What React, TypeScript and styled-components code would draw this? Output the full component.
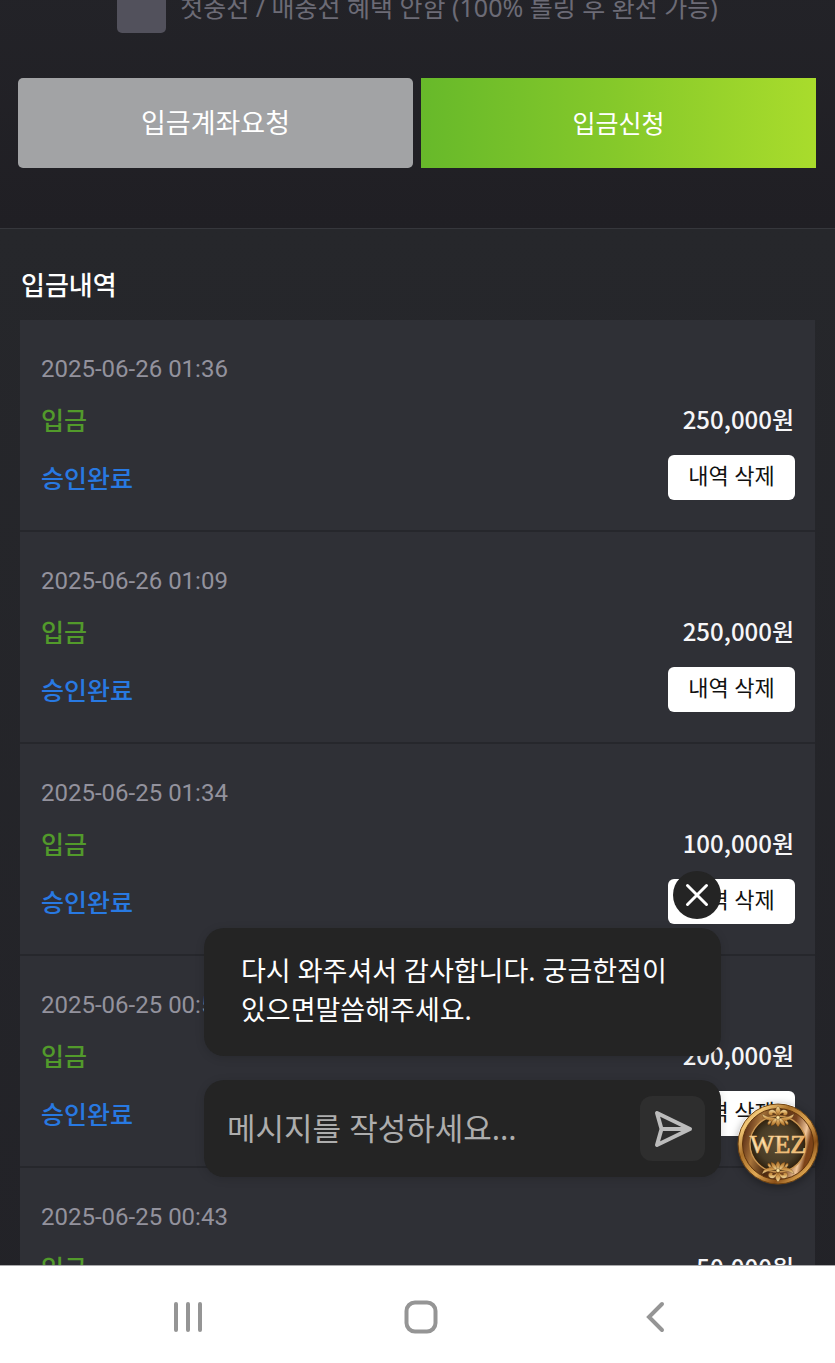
import React from "react";
import styled, { createGlobalStyle } from "styled-components";

const Global = createGlobalStyle`
  *, *::before, *::after { box-sizing: border-box; }
  body {
    margin: 0;
    background: #222227;
    font-family: Roboto, "Noto Sans CJK KR", sans-serif;
  }
  button, input { font-family: inherit; }
  button { border: 0; padding: 0; cursor: pointer; }
`;

const kr = `"Noto Sans", "Noto Sans CJK KR", sans-serif`;
const krNumeric = `"Noto Sans CJK KR", sans-serif`;

const Phone = styled.div`
  display: flex;
  flex-direction: column;
  height: 100vh;
`;

const Screen = styled.main`
  position: relative;
  flex: 1;
  min-height: 0;
  overflow: hidden;
  display: flex;
  flex-direction: column;
`;

const FormSection = styled.section`
  flex: none;
  margin-top: -16px;
  height: 245px;
  background: linear-gradient(#232328, #201f24);
  border-bottom: 1px solid #36373c;
`;

const OptionLabel = styled.label`
  display: flex;
  justify-content: center;
  align-items: center;
  gap: 14px;
  height: 49px;
  font: 400 25px/36px ${kr};
  color: #6c6b76;
  white-space: nowrap;
`;

const OptionText = styled.span`
  padding-bottom: 4px;
`;

const Tick = styled.input`
  appearance: none;
  flex: none;
  width: 49px;
  height: 49px;
  margin: 0;
  border-radius: 5px;
  background: #52515c;
`;

const Actions = styled.div`
  display: flex;
  gap: 8px;
  padding: 45px 19px 0 18px;
`;

const ActionButton = styled.button<{ $primary?: boolean }>`
  flex: 1;
  height: 90px;
  border-radius: ${(p) => (p.$primary ? 0 : 5)}px;
  background: ${(p) =>
    p.$primary ? "linear-gradient(90deg, #67b92a, #86c92a 50%, #a9dc2c)" : "#a2a3a5"};
  color: #fff;
  font: 400 ${(p) => (p.$primary ? 25 : 27)}px/36px ${kr};
`;

const HistorySection = styled.section`
  flex: none;
  padding: 36px 20px 0;
  background: linear-gradient(#26272b, #222227);
`;

const Title = styled.h2`
  margin: 0 0 15px 1px;
  font: 500 26px/40px ${kr};
  color: #fff;
`;

const List = styled.ul`
  list-style: none;
  margin: 0;
  padding: 0;
  background: #2f3036;
`;

const Row = styled.li`
  display: grid;
  grid-template-columns: 1fr auto;
  grid-template-rows: 32px 32px 45px;
  row-gap: 19px;
  align-items: center;
  padding: 33px 20px 30px 21px;
  border-bottom: 2px solid #26272c;
`;

const DateText = styled.time`
  grid-column: 1 / -1;
  font: 400 24px/32px Roboto, sans-serif;
  color: #93929d;
`;

const Label = styled.span<{ $tone: "type" | "status" }>`
  font: 500 25px/32px ${kr};
  color: ${(p) => (p.$tone === "type" ? "#529a2b" : "#2879e2")};
`;

const Amount = styled.strong`
  justify-self: end;
  padding: 0 1px 2px 0;
  font: 500 24px/32px ${krNumeric};
  color: #f6f6f8;
`;

const DeleteButton = styled.button`
  width: 127px;
  height: 45px;
  padding-bottom: 6px;
  border-radius: 6px;
  background: #fff;
  color: #111;
  font: 400 22px/32px ${kr};
`;

const Chat = styled.aside`
  position: absolute;
  right: 114px;
  bottom: 88px;
  width: 517px;
  max-width: calc(100% - 134px);
  display: flex;
  flex-direction: column;
`;

const CloseButton = styled.button`
  align-self: flex-end;
  display: grid;
  place-items: center;
  width: 48px;
  height: 48px;
  margin-bottom: 9px;
  border-radius: 50%;
  background: #242424;
`;

const Bubble = styled.p`
  margin: 0 0 24px;
  padding: 23px 37px 27px;
  border-radius: 20px;
  background: #242424;
  box-shadow: 0 2px 10px rgba(0, 0, 0, 0.14);
  color: #fff;
  font: 400 27px/39px ${kr};
`;

const Composer = styled.form`
  display: flex;
  align-items: center;
  height: 97px;
  padding: 0 16px 0 23px;
  border-radius: 20px;
  background: #242424;
  box-shadow: 0 2px 10px rgba(0, 0, 0, 0.14);
`;

const MessageInput = styled.input`
  flex: 1;
  min-width: 0;
  height: 60px;
  padding: 0 0 2px;
  border: 0;
  outline: 0;
  background: transparent;
  color: #fff;
  font: 400 31px/44px ${kr};
  &::placeholder { color: #adadad; opacity: 1; }
`;

const SendButton = styled.button`
  display: grid;
  place-items: center;
  width: 65px;
  height: 65px;
  border-radius: 12px;
  background: #2e2e2e;
`;

const CoinButton = styled.button`
  position: absolute;
  right: 16px;
  bottom: 80px;
  width: 82px;
  height: 82px;
  border-radius: 50%;
  background: transparent;
  box-shadow: 0 2px 8px rgba(0, 0, 0, 0.35);
  svg { display: block; }
`;

const NavBar = styled.nav`
  flex: none;
  display: grid;
  grid-template-columns: repeat(3, 1fr);
  height: 98px;
  padding: 5px 63px 0 71px;
  background: #fff;
  border-top: 1px solid #a9a9ab;
`;

const NavButton = styled.button`
  display: grid;
  place-items: center;
  background: transparent;
`;

const records = [
  { date: "2025-06-26 01:36", amount: "250,000원" },
  { date: "2025-06-26 01:09", amount: "250,000원" },
  { date: "2025-06-25 01:34", amount: "100,000원" },
  { date: "2025-06-25 00:56", amount: "200,000원" },
  { date: "2025-06-25 00:43", amount: "50,000원" },
];

const Ornament = () => (
  <g fill="url(#gold)" stroke="#4b2a0b" strokeWidth=".3">
    <path d="M41 3c3 3 4 7 0 11c-4-4-3-8 0-11z" />
    <path d="M41 14c1-7 6-9 9-6c2 3-1 6-4 4c2-3-2-3-5 2z" />
    <path d="M41 14c-1-7-6-9-9-6c-2 3 1 6 4 4c-2-3 2-3 5 2z" />
    <path d="M42 15c5-1 8 0 15-4c-1 4-4 6-7 6c2 3-4 4-8-2z" />
    <path d="M40 15c-5-1-8 0-15-4c1 4 4 6 7 6c-2 3 4 4 8-2z" />
    <path d="M41 14c3 3 3 7 0 10c-3-3-3-7 0-10z" />
    <path d="M42 15c4 1 6 4 6 8c-4-1-6-4-6-8zM40 15c-4 1-6 4-6 8c4-1 6-4 6-8z" />
    <path d="M48 18c3 0 4 2 3 4c-2 0-3-2-3-4zM34 18c-3 0-4 2-3 4c2 0 3-2 3-4z" />
    <circle cx="41" cy="14.5" r="1.8" fill="#ffe6a0" />
  </g>
);

const Coin = () => (
  <svg width="82" height="82" viewBox="0 0 82 82" aria-hidden="true">
    <defs>
      <linearGradient id="rim" x1="0" y1="0" x2="1" y2="1">
        <stop offset="0" stopColor="#8a551b" />
        <stop offset=".18" stopColor="#f3c878" />
        <stop offset=".34" stopColor="#a9702a" />
        <stop offset=".55" stopColor="#e0a956" />
        <stop offset=".72" stopColor="#8a4f17" />
        <stop offset=".88" stopColor="#f0b95d" />
        <stop offset="1" stopColor="#9c6522" />
      </linearGradient>
      <linearGradient id="band" x1="0" y1="0" x2="1" y2=".25">
        <stop offset="0" stopColor="#a86d3a" />
        <stop offset=".1" stopColor="#5f3218" />
        <stop offset=".28" stopColor="#a8743a" />
        <stop offset=".5" stopColor="#4a280f" />
        <stop offset=".75" stopColor="#7a4520" />
        <stop offset=".92" stopColor="#f2c79a" />
        <stop offset="1" stopColor="#7d4318" />
      </linearGradient>
      <radialGradient id="face">
        <stop offset="0" stopColor="#5c4e33" />
        <stop offset=".7" stopColor="#4a3d27" />
        <stop offset="1" stopColor="#2c200f" />
      </radialGradient>
      <linearGradient id="gold" x1="0" y1="0" x2="0" y2="1">
        <stop offset="0" stopColor="#f5dfa5" />
        <stop offset=".5" stopColor="#d09a4e" />
        <stop offset="1" stopColor="#a46824" />
      </linearGradient>
      <linearGradient id="letters" x1="0" y1="0" x2="1" y2="1">
        <stop offset="0" stopColor="#f4c987" />
        <stop offset=".35" stopColor="#ffe9bd" />
        <stop offset=".6" stopColor="#e8a962" />
        <stop offset="1" stopColor="#ffe0a5" />
      </linearGradient>
    </defs>
    <circle cx="41" cy="41" r="40" fill="url(#rim)" stroke="#70420f" />
    <circle cx="41" cy="41" r="35.500" fill="url(#band)" stroke="#5e330d" />
    <circle cx="41" cy="41" r="28" fill="url(#face)" stroke="#c99552" strokeWidth="1.4" />
    <circle cx="41" cy="41" r="26.500" fill="none" stroke="#3a240c" strokeWidth=".8" />
    <Ornament />
    <g transform="rotate(180 41 41)"><Ornament /></g>
    <g fontFamily="Liberation Serif, serif" fontSize="26" textAnchor="middle">
      <text x="41" y="50" fill="url(#letters)" stroke="#f0c27c" strokeWidth=".7">
        WEZ
      </text>
    </g>
  </svg>
);

export default function App() {
  return (
    <Phone>
      <Global />
      <Screen>
        <FormSection>
          <OptionLabel>
            <Tick type="checkbox" />
            <OptionText>첫충전 / 매충전 혜택 안함 (100% 롤링 후 환전 가능)</OptionText>
          </OptionLabel>
          <Actions>
            <ActionButton type="button">입금계좌요청</ActionButton>
            <ActionButton type="button" $primary>입금신청</ActionButton>
          </Actions>
        </FormSection>
        <HistorySection>
          <Title>입금내역</Title>
          <List>
            {records.map((r) => (
              <Row key={r.date}>
                <DateText>{r.date}</DateText>
                <Label $tone="type">입금</Label>
                <Amount>{r.amount}</Amount>
                <Label $tone="status">승인완료</Label>
                <DeleteButton type="button">내역 삭제</DeleteButton>
              </Row>
            ))}
          </List>
        </HistorySection>
        <Chat>
          <CloseButton type="button" aria-label="닫기">
            <svg width="24" height="24" viewBox="0 0 24 24" stroke="#fff" strokeWidth="3" strokeLinecap="round">
              <path d="M2.500 2.500l19 19M21.500 2.500l-19 19" />
            </svg>
          </CloseButton>
          <Bubble>다시 와주셔서 감사합니다. 궁금한점이 있으면말씀해주세요.</Bubble>
          <Composer onSubmit={(e) => e.preventDefault()}>
            <MessageInput aria-label="메시지" placeholder="메시지를 작성하세요..." />
            <SendButton type="submit" aria-label="보내기">
              <svg width="40" height="40" viewBox="0 0 40 40" fill="none" stroke="#bcbcbc" strokeWidth="4" strokeLinejoin="round" strokeLinecap="round">
                <path d="M4 4L37 20L4 36L8.500 20ZM8.500 20H37" />
              </svg>
            </SendButton>
          </Composer>
        </Chat>
        <CoinButton type="button" aria-label="상담">
          <Coin />
        </CoinButton>
      </Screen>
      <NavBar>
        <NavButton type="button" aria-label="최근 앱">
          <svg width="30" height="32" viewBox="0 0 30 32" stroke="#959595" strokeWidth="4" strokeLinecap="round">
            <path d="M3 3v26M15 3v26M27 3v26" />
          </svg>
        </NavButton>
        <NavButton type="button" aria-label="홈">
          <svg width="34" height="34" viewBox="0 0 34 34" fill="none" stroke="#959595" strokeWidth="4">
            <rect x="2.500" y="2.500" width="29" height="29" rx="8.500" />
          </svg>
        </NavButton>
        <NavButton type="button" aria-label="뒤로">
          <svg width="20" height="32" viewBox="0 0 20 32" fill="none" stroke="#959595" strokeWidth="4" strokeLinecap="round">
            <path d="M17 3L4 16L17 29" />
          </svg>
        </NavButton>
      </NavBar>
    </Phone>
  );
}
